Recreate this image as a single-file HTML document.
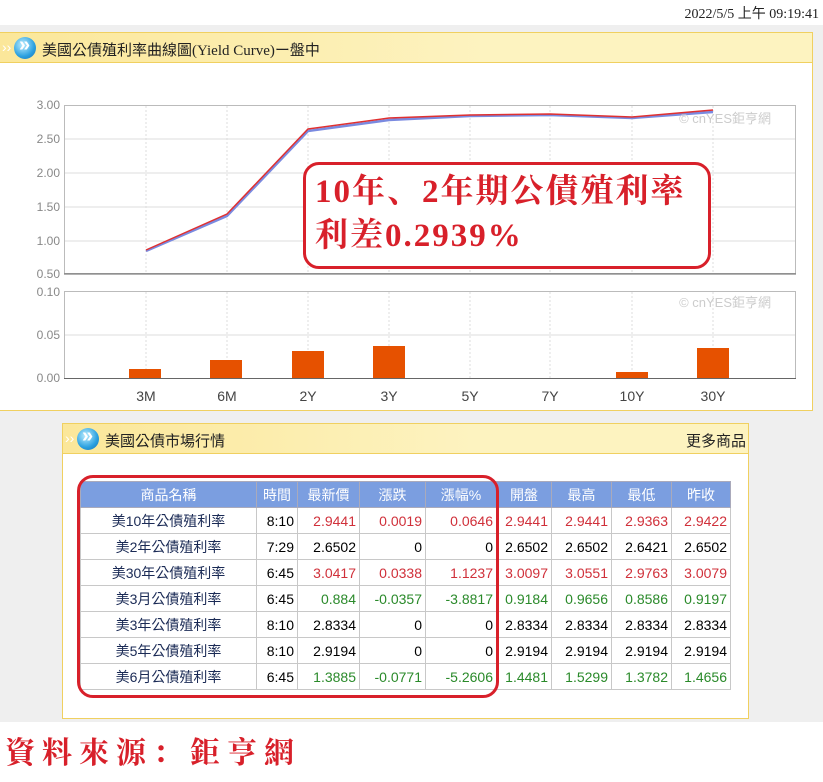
<!DOCTYPE html>
<html><head><meta charset="utf-8"><style>
*{margin:0;padding:0;box-sizing:border-box}
body{width:823px;height:782px;background:#fff;position:relative;overflow:hidden;font-family:"Liberation Sans","Noto Sans CJK TC",sans-serif}
.gray{position:absolute;left:0;top:25px;width:823px;height:697px;background:#efefef}
.date{position:absolute;right:4px;top:3px;font-family:"Liberation Serif","Noto Sans CJK TC",serif;font-size:14px;color:#222}
.panel{position:absolute;background:#fff;border:1px solid #f0d060}
.hdr{position:absolute;left:0;top:0;right:0;height:30px;background:linear-gradient(90deg,#fbe79a,#fdf3c0 60%,#fdf3c0);border-bottom:1px solid #f0d060}
.ico{position:absolute;left:14px;top:4px;width:22px;height:22px;border-radius:50%;background:radial-gradient(circle at 40% 35%,#bfefff,#2aa0e0 60%,#1a70b0);}
.ico:after{content:"»";position:absolute;left:5px;top:-3px;color:#fff;font-size:20px;font-weight:bold}
.chev{position:absolute;left:2px;top:6px;color:#fff;font-size:14px}
.ttl{position:absolute;left:42px;top:6px;font-size:15px;color:#222;font-family:"Liberation Serif","Noto Sans CJK TC",serif}
table{position:absolute;border-collapse:collapse;font-size:14px;font-family:"Liberation Sans","Noto Sans CJK TC",sans-serif}
td,th{border:1px solid #c8c8c8;height:26px;padding:0 3px;text-align:right;white-space:nowrap}
th{background:#7b9ee0;color:#fff;font-weight:normal;text-align:center;border-color:#aab}
td.n{text-align:center;color:#1a2a55}
.r{color:#d0303a}.g{color:#2a8a2a}
.box{position:absolute;border:3px solid #d8202a;border-radius:16px}
</style></head><body>
<div class="gray"></div>
<div class="date">2022/5/5 上午 09:19:41</div>

<div class="panel" style="left:-1px;top:32px;width:814px;height:379px">
<div class="hdr"><span class="chev">››</span><div class="ico"></div><div class="ttl">美國公債殖利率曲線圖(Yield Curve)ー盤中</div></div>
</div>
<svg style="position:absolute;left:0;top:0" width="823" height="420" font-family="Liberation Sans,sans-serif">
<g fill="#888" font-size="12" text-anchor="end">
<text x="60" y="109">3.00</text><text x="60" y="143">2.50</text><text x="60" y="177">2.00</text><text x="60" y="211">1.50</text><text x="60" y="245">1.00</text><text x="60" y="278">0.50</text>
<text x="60" y="296">0.10</text><text x="60" y="339">0.05</text><text x="60" y="382">0.00</text></g>
<rect x="64.5" y="105.5" width="731" height="168" fill="#fff" stroke="#bbb"/>
<g stroke="#ddd"><line x1="65" y1="139" x2="795" y2="139"/><line x1="65" y1="173" x2="795" y2="173"/><line x1="65" y1="207" x2="795" y2="207"/><line x1="65" y1="241" x2="795" y2="241"/><line x1="65" y1="335" x2="795" y2="335"/></g>
<rect x="64.5" y="291.5" width="731" height="87" fill="none" stroke="#bbb"/>
<g stroke="#ddd" stroke-dasharray="2,2"><path d="M146 106V273M227 106V273M308 106V273M389 106V273M470 106V273M550 106V273M632 106V273M713 106V273M146 292V378M227 292V378M308 292V378M389 292V378M470 292V378M550 292V378M632 292V378M713 292V378"/></g>
<line x1="64" y1="274" x2="796" y2="274" stroke="#666"/><line x1="64" y1="378.5" x2="796" y2="378.5" stroke="#666"/>
<polyline points="146,251 227,216 308,131 389,120 470,116 550,115 632,118 713,112" fill="none" stroke="#7a8ae0" stroke-width="2.5"/>
<polyline points="146,250 227,214 308,129 389,118 470,115 550,114 632,117 713,110" fill="none" stroke="#e03030" stroke-width="1.5"/>
<g fill="#e65100"><rect x="129" y="369" width="32" height="9"/><rect x="210" y="360" width="32" height="18"/><rect x="292" y="351" width="32" height="27"/><rect x="373" y="346" width="32" height="32"/><rect x="616" y="372" width="32" height="6"/><rect x="697" y="348" width="32" height="30"/></g>
<g fill="#444" font-size="14" text-anchor="middle"><text x="146" y="401">3M</text><text x="227" y="401">6M</text><text x="308" y="401">2Y</text><text x="389" y="401">3Y</text><text x="470" y="401">5Y</text><text x="550" y="401">7Y</text><text x="632" y="401">10Y</text><text x="713" y="401">30Y</text></g>
<g fill="#ccc" font-size="13" text-anchor="end" font-family="Liberation Sans,Noto Sans CJK TC,sans-serif"><text x="771" y="123">© cnYES鉅亨網</text><text x="771" y="307">© cnYES鉅亨網</text></g>
</svg>
<div class="box" style="left:303px;top:162px;width:408px;height:107px;background:#fff"></div>
<div style="position:absolute;left:315px;top:170px;font-family:'Liberation Serif','Noto Serif CJK SC',serif;font-weight:bold;font-size:33px;line-height:44px;color:#d8202a;letter-spacing:2px">10年、2年期公債殖利率<br>利差0.2939%</div>

<div class="panel" style="left:62px;top:423px;width:687px;height:296px">
<div class="hdr"><span class="chev">››</span><div class="ico"></div><div class="ttl" style="font-family:'Liberation Sans','Noto Sans CJK TC',sans-serif">美國公債市場行情</div><div style="position:absolute;right:2px;top:6px;font-size:15px;color:#222">更多商品</div></div>
</div>
<table style="left:80px;top:481px;width:651px">
<tr><th style="width:176px">商品名稱</th><th style="width:41px">時間</th><th style="width:62px">最新價</th><th style="width:66px">漲跌</th><th style="width:71px">漲幅%</th><th style="width:55px">開盤</th><th style="width:60px">最高</th><th style="width:60px">最低</th><th>昨收</th></tr>
<tr><td class="n">美10年公債殖利率</td><td>8:10</td><td class="r">2.9441</td><td class="r">0.0019</td><td class="r">0.0646</td><td class="r">2.9441</td><td class="r">2.9441</td><td class="r">2.9363</td><td class="r">2.9422</td></tr>
<tr><td class="n">美2年公債殖利率</td><td>7:29</td><td>2.6502</td><td>0</td><td>0</td><td>2.6502</td><td>2.6502</td><td>2.6421</td><td>2.6502</td></tr>
<tr><td class="n">美30年公債殖利率</td><td>6:45</td><td class="r">3.0417</td><td class="r">0.0338</td><td class="r">1.1237</td><td class="r">3.0097</td><td class="r">3.0551</td><td class="r">2.9763</td><td class="r">3.0079</td></tr>
<tr><td class="n">美3月公債殖利率</td><td>6:45</td><td class="g">0.884</td><td class="g">-0.0357</td><td class="g">-3.8817</td><td class="g">0.9184</td><td class="g">0.9656</td><td class="g">0.8586</td><td class="g">0.9197</td></tr>
<tr><td class="n">美3年公債殖利率</td><td>8:10</td><td>2.8334</td><td>0</td><td>0</td><td>2.8334</td><td>2.8334</td><td>2.8334</td><td>2.8334</td></tr>
<tr><td class="n">美5年公債殖利率</td><td>8:10</td><td>2.9194</td><td>0</td><td>0</td><td>2.9194</td><td>2.9194</td><td>2.9194</td><td>2.9194</td></tr>
<tr><td class="n">美6月公債殖利率</td><td>6:45</td><td class="g">1.3885</td><td class="g">-0.0771</td><td class="g">-5.2606</td><td class="g">1.4481</td><td class="g">1.5299</td><td class="g">1.3782</td><td class="g">1.4656</td></tr>
</table>
<div class="box" style="left:77px;top:475px;width:422px;height:223px"></div>

<div style="position:absolute;left:5px;top:728px;font-family:'Liberation Serif','Noto Serif CJK SC',serif;font-weight:bold;font-size:30px;color:#d8202a;letter-spacing:7px">資料來源：鉅亨網</div>
</body></html>
